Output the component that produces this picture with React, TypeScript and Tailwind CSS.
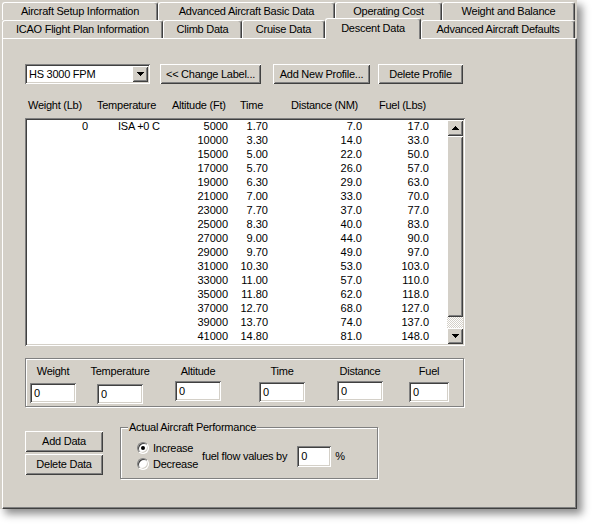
import type { ReactNode } from "react"

const raised =
  "shadow-[inset_1px_1px_#ffffff,inset_-1px_-1px_#404040,inset_2px_2px_#d4d0c8,inset_-2px_-2px_#808080]"
const sunken =
  "shadow-[inset_1px_1px_#808080,inset_-1px_-1px_#ffffff,inset_2px_2px_#404040,inset_-2px_-2px_#d4d0c8]"
const etched = "border border-[#808080] shadow-[inset_1px_1px_#ffffff,1px_1px_#ffffff]"

const backTabs = [
  { label: "Aircraft Setup Information", w: "w-[156px]" },
  { label: "Advanced Aircraft Basic Data", w: "w-[177px]" },
  { label: "Operating Cost", w: "w-[107px]" },
  { label: "Weight and Balance", w: "w-[133px]" },
]

const frontTabs = [
  { label: "ICAO Flight Plan Information", w: "w-[161px]" },
  { label: "Climb Data", w: "w-[79px]" },
  { label: "Cruise Data", w: "w-[83px]" },
  { label: "Descent Data", w: "w-[96px]", active: true },
  { label: "Advanced Aircraft Defaults", w: "w-[154px]" },
]

// altitude, time, distance, fuel
const profile = [
  ["5000", "1.70", "7.0", "17.0"],
  ["10000", "3.30", "14.0", "33.0"],
  ["15000", "5.00", "22.0", "50.0"],
  ["17000", "5.70", "26.0", "57.0"],
  ["19000", "6.30", "29.0", "63.0"],
  ["21000", "7.00", "33.0", "70.0"],
  ["23000", "7.70", "37.0", "77.0"],
  ["25000", "8.30", "40.0", "83.0"],
  ["27000", "9.00", "44.0", "90.0"],
  ["29000", "9.70", "49.0", "97.0"],
  ["31000", "10.30", "53.0", "103.0"],
  ["33000", "11.00", "57.0", "110.0"],
  ["35000", "11.80", "62.0", "118.0"],
  ["37000", "12.70", "68.0", "127.0"],
  ["39000", "13.70", "74.0", "137.0"],
  ["41000", "14.80", "81.0", "148.0"],
]

function Tab({ label, w, active }: { label: string; w: string; active?: boolean }) {
  return (
    <div
      className={`${w} flex shrink-0 items-center justify-center whitespace-nowrap rounded-t-[3px] border-t border-l border-r border-t-white border-l-white border-r-[#404040] bg-[#d4d0c8] shadow-[inset_-1px_0_#808080] ${
        active ? "relative z-10 -mt-[2px] h-[21px] pb-[1px]" : "h-[18px]"
      }`}
    >
      {label}
    </div>
  )
}

function Btn({ children, className }: { children: ReactNode; className: string }) {
  return (
    <button type="button" className={`flex shrink-0 items-center justify-center bg-[#d4d0c8] ${raised} ${className}`}>
      {children}
    </button>
  )
}

function ArrowDown() {
  return (
    <svg width="7" height="4" viewBox="0 0 7 4" shapeRendering="crispEdges">
      <path d="M0 0h7v1H0zM1 1h5v1H1zM2 2h3v1H2zM3 3h1v1H3z" fill="#000" />
    </svg>
  )
}

function ArrowUp() {
  return (
    <svg width="7" height="4" viewBox="0 0 7 4" shapeRendering="crispEdges">
      <path d="M3 0h1v1H3zM2 1h3v1H2zM1 2h5v1H1zM0 3h7v1H0z" fill="#000" />
    </svg>
  )
}

function Field({ label, className, boxClass }: { label: string; className: string; boxClass: string }) {
  return (
    <div className={`flex shrink-0 flex-col items-center ${className}`}>
      <span className="h-[13px] whitespace-nowrap">{label}</span>
      <div className={`flex h-[20px] w-full items-center bg-white pl-[4px] ${sunken} ${boxClass}`}>0</div>
    </div>
  )
}

function Radio({ checked, label }: { checked?: boolean; label: string }) {
  return (
    <div className="flex h-[16px] items-center">
      <div className="flex h-[12px] w-[12px] items-center justify-center rounded-full border border-t-[#808080] border-l-[#808080] border-r-white border-b-white bg-white shadow-[inset_1px_1px_#404040,inset_-1px_-1px_#d4d0c8]">
        {checked && <div className="h-[4px] w-[4px] rounded-full bg-black" />}
      </div>
      <span className="ml-[4px]">{label}</span>
    </div>
  )
}

export default function App() {
  return (
    <div className="h-[526px] w-[593px] bg-white font-['Liberation_Sans',Arial,sans-serif] text-[11px] leading-[13px] tracking-[-0.25px] text-black">
      <div className="flex h-[509px] w-[577px] flex-col bg-[#d4d0c8] pt-[2px] shadow-[5px_5px_8px_rgba(0,0,0,0.45)]">
        {/* tab strip */}
        <div className="flex h-[18px] pl-[2px]">
          {backTabs.map((t) => (
            <Tab key={t.label} label={t.label} w={t.w} />
          ))}
        </div>
        <div className="flex h-[18px] items-start pl-[2px]">
          {frontTabs.map((t) => (
            <Tab key={t.label} label={t.label} w={t.w} active={t.active} />
          ))}
        </div>

        {/* page */}
        <div className="ml-[2px] flex-1 border border-t-white border-l-white border-r-[#404040] border-b-[#404040] shadow-[inset_-1px_-1px_#808080]">
          <div className="flex flex-col pl-[22px] pt-[25px]">
            <div className="flex h-[20px] items-center">
              <div className={`flex h-[20px] w-[125px] items-center bg-white p-[2px] ${sunken}`}>
                <span className="flex-1 pl-[2px]">HS 3000 FPM</span>
                <div className={`flex h-full w-[16px] items-center justify-center bg-[#d4d0c8] ${raised}`}>
                  <ArrowDown />
                </div>
              </div>
              <Btn className="ml-[10px] h-[20px] w-[101px]">&lt;&lt; Change Label...</Btn>
              <Btn className="ml-[12px] h-[20px] w-[97px]">Add New Profile...</Btn>
              <Btn className="ml-[8px] h-[20px] w-[85px]">Delete Profile</Btn>
            </div>

            <div className="mt-[15px] flex h-[13px] pl-[3px] whitespace-nowrap">
              <span className="w-[69px]">Weight (Lb)</span>
              <span className="w-[75px]">Temperature</span>
              <span className="w-[68px]">Altitude (Ft)</span>
              <span className="w-[51px]">Time</span>
              <span className="w-[88px]">Distance (NM)</span>
              <span>Fuel (Lbs)</span>
            </div>

            {/* profile list */}
            <div className={`mt-[6px] flex h-[228px] w-[440px] bg-white p-[2px] ${sunken}`}>
              <div className="-mt-px flex-1 tracking-normal">
                {profile.map((r, i) => (
                  <div key={r[0]} className="flex h-[14px] items-center leading-[14px]">
                    <span className="w-[61px] text-right">{i === 0 ? "0" : ""}</span>
                    <span className="w-[88px] pl-[30px] tracking-[-0.25px]">{i === 0 ? "ISA +0 C" : ""}</span>
                    <span className="w-[52px] text-right">{r[0]}</span>
                    <span className="w-[40px] text-right">{r[1]}</span>
                    <span className="w-[94px] text-right">{r[2]}</span>
                    <span className="w-[67px] text-right">{r[3]}</span>
                  </div>
                ))}
              </div>
              <div className="flex w-[16px] flex-col">
                <div className={`flex h-[16px] items-center justify-center bg-[#d4d0c8] ${raised}`}>
                  <ArrowUp />
                </div>
                <div className={`h-[181px] bg-[#d4d0c8] ${raised}`} />
                <div className="h-[11px] bg-[repeating-conic-gradient(#ffffff_0%_25%,#d4d0c8_0%_50%)] bg-[length:2px_2px]" />
                <div className={`flex h-[16px] items-center justify-center bg-[#d4d0c8] ${raised}`}>
                  <ArrowDown />
                </div>
              </div>
            </div>

            {/* entry fields */}
            <div className={`mt-[12px] flex h-[49px] w-[439px] pl-[4px] pt-[6px] ${etched}`}>
              <Field label="Weight" className="w-[46px]" boxClass="mt-[5px]" />
              <Field label="Temperature" className="ml-[21px] w-[46px]" boxClass="mt-[6px]" />
              <Field label="Altitude" className="ml-[32px] w-[46px]" boxClass="mt-[3px]" />
              <Field label="Time" className="ml-[38px] w-[46px]" boxClass="mt-[4px]" />
              <Field label="Distance" className="ml-[32px] w-[46px]" boxClass="mt-[3px]" />
              <Field label="Fuel" className="ml-[26px] w-[40px]" boxClass="mt-[4px]" />
            </div>

            <div className="mt-[20px] flex items-start">
              <div className="flex flex-col pt-[4px]">
                <Btn className="h-[21px] w-[78px]">Add Data</Btn>
                <Btn className="mt-[2px] h-[21px] w-[78px]">Delete Data</Btn>
              </div>

              <div className={`relative ml-[17px] flex h-[52px] w-[258px] items-start pl-[16px] pt-[12px] ${etched}`}>
                <span className="absolute -top-[7px] left-[7px] bg-[#d4d0c8] px-[1px] whitespace-nowrap">
                  Actual Aircraft Performance
                </span>
                <div className="flex items-center">
                  <div className="flex flex-col">
                    <Radio checked label="Increase" />
                    <Radio label="Decrease" />
                  </div>
                  <span className="ml-[4px] whitespace-nowrap">fuel flow values by</span>
                  <div className={`ml-[10px] flex h-[21px] w-[34px] items-center bg-white pl-[4px] ${sunken}`}>0</div>
                  <span className="ml-[4px]">%</span>
                </div>
              </div>
            </div>
          </div>
        </div>
      </div>
    </div>
  )
}
